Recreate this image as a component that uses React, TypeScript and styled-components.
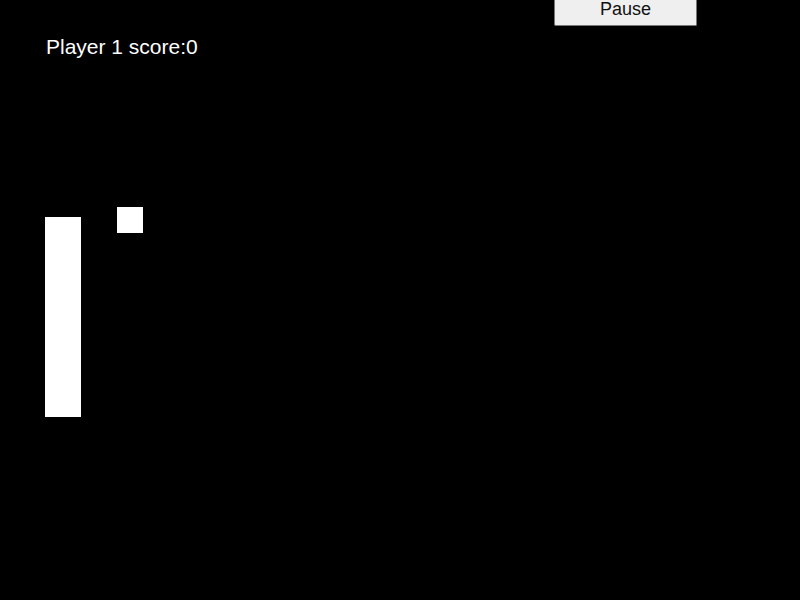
import React from "react";
import styled, { createGlobalStyle } from "styled-components";

const Global = createGlobalStyle`
  html, body { margin: 0; padding: 0; background: #000; }
  body { font-family: "Liberation Sans", Arial, sans-serif; }
`;

const Stage = styled.div`
  position: relative;
  width: 800px;
  height: 600px;
  background: #000;
  overflow: hidden;
  display: flex;
  flex-direction: column;
`;

const TopBar = styled.div`
  display: flex;
  justify-content: flex-end;
  padding-right: 103px;
`;

const PauseButton = styled.button`
  width: 143px;
  height: 26px;
  margin: 0;
  padding: 0;
  background: #efefef;
  border: 1px solid #767676;
  border-top: none;
  border-radius: 0 0 2px 2px;
  color: #111;
  font-family: "Liberation Sans", Arial, sans-serif;
  font-size: 18px;
  line-height: 19px;
  display: flex;
  align-items: flex-start;
  justify-content: center;
  cursor: pointer;
`;

const Score = styled.div`
  margin: 9px 0 0 46px;
  color: #fff;
  font-family: "Liberation Sans", Arial, sans-serif;
  font-size: 21px;
  line-height: 24px;
`;

const Block = styled.div`
  position: absolute;
  background: #fff;
`;

const game = {
  paddle: { x: 45, y: 217, w: 36, h: 200 },
  ball: { x: 117, y: 207, w: 26, h: 26 },
};

export default function App() {
  return (
    <>
      <Global />
      <Stage>
        <TopBar>
          <PauseButton>Pause</PauseButton>
        </TopBar>
        <Score>Player 1 score:0</Score>
        <Block
          style={{
            left: game.paddle.x,
            top: game.paddle.y,
            width: game.paddle.w,
            height: game.paddle.h,
          }}
        />
        <Block
          style={{
            left: game.ball.x,
            top: game.ball.y,
            width: game.ball.w,
            height: game.ball.h,
          }}
        />
      </Stage>
    </>
  );
}
